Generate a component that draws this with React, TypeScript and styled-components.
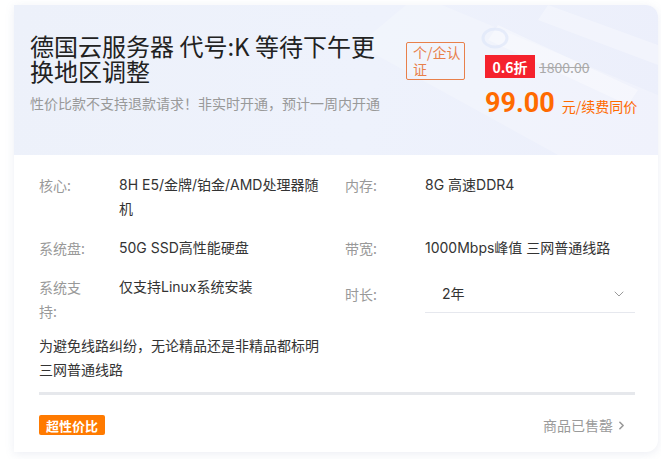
import React from "react";
import styled, { createGlobalStyle } from "styled-components";
import { ChevronDown, ChevronRight } from "lucide-react";

const Global = createGlobalStyle`
  html, body { margin: 0; padding: 0; background: #ffffff; }
  body { font-family: "Inter", "Noto Sans CJK SC", sans-serif; }
  * { box-sizing: border-box; }
`;

const Page = styled.div`
  width: 661px;
  height: 459px;
  padding: 5px 3px 0 14px;
`;

const Card = styled.div`
  width: 644px;
  height: 447px;
  background: #ffffff;
  border-radius: 0 12px 12px 0;
  box-shadow: 0 2px 10px rgba(120, 135, 180, 0.14);
  overflow: hidden;
  display: flex;
  flex-direction: column;
`;

const Header = styled.div`
  position: relative;
  height: 150px;
  flex: none;
  display: flex;
  padding: 28px 0 0 16px;
  background: linear-gradient(100deg, #edf1fa 0%, #eef2fc 55%, #eceffb 100%);
  overflow: hidden;
`;

const Deco = styled.svg`
  position: absolute;
  right: 0;
  top: 0;
  pointer-events: none;
`;

const TitleCol = styled.div`
  width: 358px;
  flex: none;
  position: relative;
`;

const Title = styled.h1`
  margin: 0;
  font-family: "Noto Sans CJK SC", sans-serif;
  font-weight: 400;
  font-size: 24px;
  line-height: 25px;
  color: #222222;
`;

const Subtitle = styled.p`
  margin: 10px 0 0 0;
  font-family: "Noto Sans CJK SC", sans-serif;
  font-size: 14px;
  line-height: 20px;
  color: #999999;
`;

const AuthBadge = styled.div`
  position: relative;
  flex: none;
  width: 59px;
  height: 38px;
  margin: 9px 0 0 18px;
  padding: 1px 0 0 6px;
  border: 1px solid #e8804a;
  border-radius: 2px;
  font-family: "Noto Sans CJK SC", sans-serif;
  font-size: 14px;
  line-height: 17px;
  color: #e8804a;
`;

const PriceCol = styled.div`
  position: relative;
  flex: none;
  margin: 22px 0 0 20px;
  display: flex;
  flex-direction: column;
`;

const DiscountRow = styled.div`
  display: flex;
  align-items: center;
  gap: 4px;
`;

const DiscountTag = styled.span`
  width: 50px;
  height: 23px;
  background: #f5222d;
  color: #fff;
  font-family: "Noto Sans CJK SC", sans-serif;
  font-weight: 700;
  font-size: 14px;
  display: flex;
  align-items: center;
  justify-content: center;
`;

const OldPrice = styled.span`
  font-family: "Noto Sans CJK SC", sans-serif;
  font-size: 14px;
  color: #aaaaaa;
  text-decoration: line-through;
`;

const PriceRow = styled.div`
  display: flex;
  align-items: baseline;
  gap: 7px;
  margin-top: 9px;
  color: #ff6a00;
`;

const Price = styled.span`
  font-family: "Roboto", sans-serif;
  font-weight: 700;
  font-size: 27px;
  line-height: 32px;
`;

const PriceUnit = styled.span`
  font-family: "Noto Sans CJK SC", sans-serif;
  font-size: 14px;
`;

const Body = styled.div`
  flex: 1;
  display: flex;
  flex-direction: column;
  padding: 18px 23px 0 25px;
`;

const SpecGrid = styled.div`
  display: grid;
  grid-template-columns: 306px 290px;
  row-gap: 15px;
  align-items: start;
`;

const Spec = styled.div<{ $center?: boolean }>`
  display: flex;
  align-items: ${(p) => (p.$center ? "center" : "flex-start")};
  font-family: "Noto Sans CJK SC", sans-serif;
  font-size: 14px;
  line-height: 24px;
`;

const Label = styled.div`
  width: 58px;
  flex: none;
  margin-right: 22px;
  color: #999999;
`;

const Value = styled.div`
  flex: 1;
  min-width: 0;
  padding-right: 18px;
  color: #333333;
  font-family: "Inter", "Noto Sans CJK SC", sans-serif;
`;

const Select = styled.div`
  flex: 1;
  height: 38px;
  display: flex;
  align-items: center;
  justify-content: space-between;
  padding: 0 8px 0 17px;
  border-bottom: 1px solid #e6e8ee;
  color: #333333;
  font-family: "Inter", "Noto Sans CJK SC", sans-serif;
`;

const Note = styled.p`
  margin: 10px 0 0 0;
  width: 290px;
  font-family: "Noto Sans CJK SC", sans-serif;
  font-size: 14px;
  line-height: 24px;
  color: #333333;
`;

const Divider = styled.div`
  height: 3px;
  margin-top: 11px;
  background: #e6e8ec;
`;

const Footer = styled.div`
  display: flex;
  align-items: center;
  justify-content: space-between;
  padding: 20px 0 0 0;
`;

const HotTag = styled.span`
  width: 66px;
  height: 20px;
  border-radius: 2px;
  background: #ff7a00;
  color: #ffffff;
  font-family: "Noto Sans CJK SC", sans-serif;
  font-weight: 700;
  font-size: 13px;
  display: flex;
  align-items: center;
  justify-content: center;
`;

const SoldOut = styled.span`
  display: flex;
  align-items: center;
  gap: 2px;
  margin-right: 7px;
  font-family: "Noto Sans CJK SC", sans-serif;
  font-size: 14px;
  color: #9a9a9a;
`;

export default function App() {
  return (
    <>
      <Global />
      <Page>
        <Card>
          <Header>
            <Deco width="360" height="150" viewBox="0 0 360 150">
              <path d="M120 -10 L360 90 L360 150 L260 150 L60 40 Z" fill="#ffffff" opacity="0.22" />
              <path d="M200 20 L340 85 L330 100 L190 35 Z" fill="#ffffff" opacity="0.35" />
              <path d="M250 0 L360 40 L360 60 L240 15 Z" fill="#ffffff" opacity="0.3" />
              <ellipse cx="197" cy="33" rx="12" ry="9" fill="none" stroke="#dce4f8" strokeWidth="3" opacity="0.6" />
            </Deco>
            <TitleCol>
              <Title>德国云服务器 代号:K 等待下午更换地区调整</Title>
              <Subtitle>性价比款不支持退款请求！非实时开通，预计一周内开通</Subtitle>
            </TitleCol>
            <AuthBadge>个/企认证</AuthBadge>
            <PriceCol>
              <DiscountRow>
                <DiscountTag>0.6折</DiscountTag>
                <OldPrice>1800.00</OldPrice>
              </DiscountRow>
              <PriceRow>
                <Price>99.00</Price>
                <PriceUnit>元/续费同价</PriceUnit>
              </PriceRow>
            </PriceCol>
          </Header>
          <Body>
            <SpecGrid>
              <Spec>
                <Label>核心:</Label>
                <Value>8H E5/金牌/铂金/AMD处理器随机</Value>
              </Spec>
              <Spec>
                <Label>内存:</Label>
                <Value>8G 高速DDR4</Value>
              </Spec>
              <Spec>
                <Label>系统盘:</Label>
                <Value>50G SSD高性能硬盘</Value>
              </Spec>
              <Spec>
                <Label>带宽:</Label>
                <Value>1000Mbps峰值 三网普通线路</Value>
              </Spec>
              <Spec>
                <Label>系统支持:</Label>
                <Value>仅支持Linux系统安装</Value>
              </Spec>
              <Spec $center>
                <Label>时长:</Label>
                <Select>
                  <span>2年</span>
                  <ChevronDown size={16} strokeWidth={1.3} color="#8a8a8a" />
                </Select>
              </Spec>
            </SpecGrid>
            <Note>为避免线路纠纷，无论精品还是非精品都标明三网普通线路</Note>
            <Divider />
            <Footer>
              <HotTag>超性价比</HotTag>
              <SoldOut>
                商品已售罄
                <ChevronRight size={13} strokeWidth={3} color="#9a9a9a" />
              </SoldOut>
            </Footer>
          </Body>
        </Card>
      </Page>
    </>
  );
}
